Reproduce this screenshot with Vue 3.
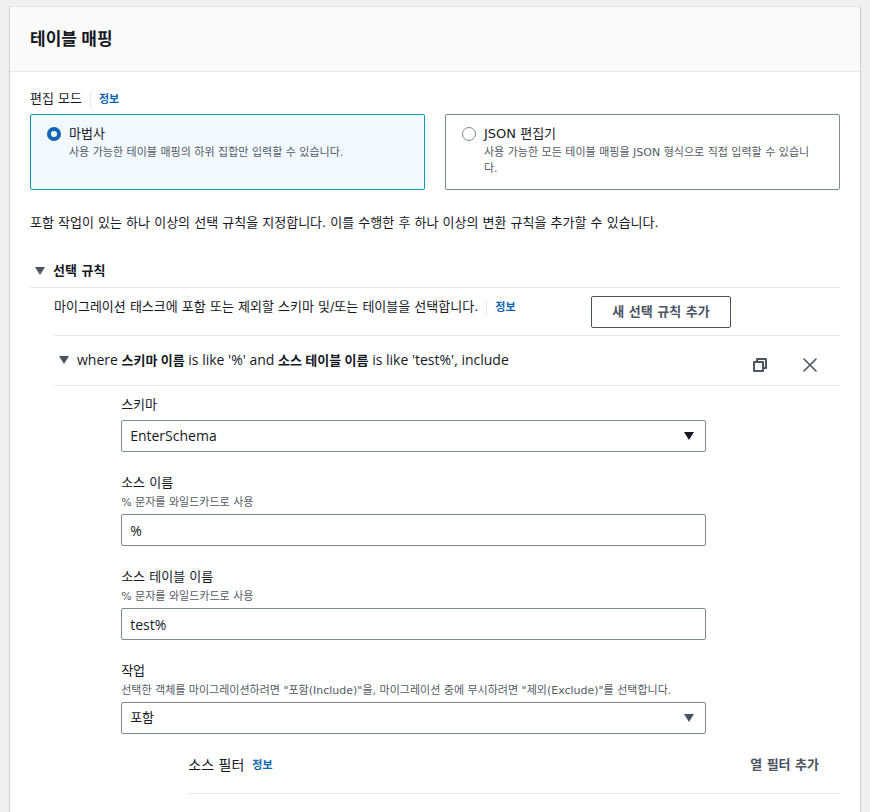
<script setup>
import { ref } from 'vue'

const mode = ref('wizard')
const modes = [
  { value: 'wizard', title: '마법사', text: '사용 가능한 테이블 매핑의 하위 집합만 입력할 수 있습니다.' },
  { value: 'json', title: 'JSON 편집기', text: '사용 가능한 모든 테이블 매핑을 JSON 형식으로 직접 입력할 수 있습니다.' },
]

const rulesOpen = ref(true)
const ruleOpen = ref(true)
const schema = ref('EnterSchema')
const sourceName = ref('%')
const tableName = ref('test%')
const action = ref('include')
</script>

<template>
  <main class="page">
    <section class="card">
      <header class="card-header">
        <h2>테이블 매핑</h2>
      </header>

      <div class="card-body">
        <div class="label-row">
          <span id="mode-label">편집 모드</span>
          <a class="info divided" href="#info-mode">정보</a>
        </div>

        <div class="tiles" role="radiogroup" aria-labelledby="mode-label">
          <label v-for="m in modes" :key="m.value" class="tile" :class="{ selected: mode === m.value }">
            <input v-model="mode" class="radio" type="radio" name="mode" :value="m.value" />
            <span class="tile-text">
              <span class="tile-title">{{ m.title }}</span>
              <span class="hint">{{ m.text }}</span>
            </span>
          </label>
        </div>

        <p class="intro">포함 작업이 있는 하나 이상의 선택 규칙을 지정합니다. 이를 수행한 후 하나 이상의 변환 규칙을 추가할 수 있습니다.</p>

        <h3 class="section-head">
          <button class="toggle strong" type="button" :aria-expanded="rulesOpen" @click="rulesOpen = !rulesOpen">
            <svg class="caret" viewBox="0 0 10 8" aria-hidden="true"><path d="M0 0h10L5 8z" /></svg>
            <span>선택 규칙</span>
          </button>
        </h3>

        <div v-show="rulesOpen" class="rules">
          <div class="grid add-row">
            <div class="label-row add-text">
              <span>마이그레이션 태스크에 포함 또는 제외할 스키마 및/또는 테이블을 선택합니다.</span>
              <a class="info divided" href="#info-rules">정보</a>
            </div>
            <button class="add-button" type="button">새 선택 규칙 추가</button>
          </div>

          <div class="rule-head">
            <button class="toggle" type="button" :aria-expanded="ruleOpen" @click="ruleOpen = !ruleOpen">
              <svg class="caret" viewBox="0 0 10 8" aria-hidden="true"><path d="M0 0h10L5 8z" /></svg>
              <span class="latin">where <b>스키마 이름</b> is like '%' and <b>소스 테이블 이름</b> is like 'test%', include</span>
            </button>
            <div class="rule-actions">
              <button class="icon-button" type="button" aria-label="복제">
                <svg viewBox="0 0 16 16" aria-hidden="true"><path d="M2 5h9v9H2zM5 5V2h9v9h-3" stroke-width="2" stroke-linejoin="round" /></svg>
              </button>
              <button class="icon-button" type="button" aria-label="제거">
                <svg viewBox="0 0 16 16" aria-hidden="true"><path d="M2 2l12 12M14 2L2 14" stroke-linecap="round" class="thin" /></svg>
              </button>
            </div>
          </div>

          <form v-show="ruleOpen" class="grid form" @submit.prevent>
            <div class="field">
              <label for="schema">스키마</label>
              <div class="select">
                <select id="schema" v-model="schema" class="control latin">
                  <option value="EnterSchema">EnterSchema</option>
                </select>
                <svg class="caret dark" viewBox="0 0 10 8" aria-hidden="true"><path d="M0 0h10L5 8z" /></svg>
              </div>
            </div>

            <div class="field">
              <label for="source">소스 이름</label>
              <span id="source-hint" class="hint">% 문자를 와일드카드로 사용</span>
              <input id="source" v-model="sourceName" class="control latin" type="text" aria-describedby="source-hint" />
            </div>

            <div class="field">
              <label for="table">소스 테이블 이름</label>
              <span id="table-hint" class="hint">% 문자를 와일드카드로 사용</span>
              <input id="table" v-model="tableName" class="control latin" type="text" aria-describedby="table-hint" />
            </div>

            <div class="field">
              <label for="action">작업</label>
              <span id="action-hint" class="hint">선택한 객체를 마이그레이션하려면 "포함(Include)"을, 마이그레이션 중에 무시하려면 "제외(Exclude)"를 선택합니다.</span>
              <div class="select">
                <select id="action" v-model="action" class="control" aria-describedby="action-hint">
                  <option value="include">포함</option>
                  <option value="exclude">제외</option>
                </select>
                <svg class="caret" viewBox="0 0 10 8" aria-hidden="true"><path d="M0 0h10L5 8z" /></svg>
              </div>
            </div>

            <div class="filters">
              <div class="label-row">
                <span class="filters-title">소스 필터</span>
                <a class="info" href="#info-filter">정보</a>
              </div>
              <button class="link-button" type="button">열 필터 추가</button>
            </div>
          </form>
        </div>
      </div>
    </section>
  </main>
</template>

<style>
body {
  margin: 0;
  background: #eff1f1;
}
</style>

<style scoped>
.page {
  display: flex;
  box-sizing: border-box;
  min-height: 100vh;
  padding: 6px 9px 0;
  color: #16191f;
  font: 13px/22px "DejaVu Sans", "Noto Sans CJK KR", sans-serif;
}

.page *,
.page *::before {
  box-sizing: border-box;
}

.card {
  flex: 1;
  min-width: 0;
  background: #fff;
  border: 1px solid #c9cfcf;
  border-top-color: #e3e7e7;
  border-bottom: 0;
}

.card-header {
  padding: 20px;
  background: #fafafa;
  border-bottom: 1px solid #e6eaea;
}

h2 {
  margin: 0;
  font-family: "Open Sans", "Noto Sans CJK KR", sans-serif;
  font-size: 17px;
  font-weight: 700;
  line-height: 24px;
}

h3,
p {
  margin: 0;
}

.card-body {
  padding: 16px 20px 18px;
}

button,
input,
select {
  margin: 0;
  color: inherit;
  font: inherit;
}

button {
  padding: 0;
  background: none;
  border: 0;
  cursor: pointer;
}

.latin {
  font-family: "Open Sans", "Noto Sans CJK KR", sans-serif;
  font-size: 14px;
}

.latin b {
  font-size: 13px;
}

.label-row {
  display: flex;
  gap: 8px;
}

.info {
  padding-top: 2px;
  color: #0f66b4;
  font-size: 11px;
  font-weight: 700;
  line-height: 20px;
  text-decoration: none;
}

.divided {
  display: flex;
  align-items: center;
  gap: 8px;
}

.divided::before {
  content: "";
  width: 1px;
  height: 16px;
  background: #e6eaea;
}

.tiles {
  display: grid;
  grid-template-columns: 1fr 1fr;
  gap: 20px;
  margin-top: 4px;
}

.tile {
  display: flex;
  gap: 8px;
  padding: 9px 20px 12px 16px;
  border: 1px solid #7c8b8b;
  border-radius: 2px;
  cursor: pointer;
}

.tile.selected {
  background: #f1f8ff;
  border-color: #0e9abc;
}

.radio {
  flex: none;
  width: 14px;
  height: 14px;
  margin-top: 3px;
  background: #fff;
  border: 1px solid #7c8b8b;
  border-radius: 50%;
  appearance: none;
}

.radio:checked {
  border: 4px solid #0f66b4;
}

.tile-title {
  display: block;
  line-height: 20px;
}

.hint {
  display: block;
  padding-top: 1px;
  color: #545b64;
  font-size: 11px;
  line-height: 16px;
}

.tile .hint {
  word-break: break-all;
}

.intro {
  margin-top: 22px;
}

.section-head {
  margin-top: 26px;
  padding: 0 5px 5px;
  border-bottom: 1px solid #e6eaea;
  font-size: 13px;
}

.toggle {
  display: flex;
  align-items: center;
  gap: 8px;
  text-align: left;
}

.strong {
  font-weight: 700;
}

.caret {
  flex: none;
  width: 10px;
  height: 8px;
  fill: #4c5462;
}

.caret.dark {
  fill: #16191f;
}

.rules {
  padding-left: 24px;
}

.grid {
  display: grid;
  grid-template-columns: repeat(12, minmax(0, 1fr));
  column-gap: 20px;
}

.add-row {
  align-items: start;
  padding: 8px 0 7px;
  border-bottom: 1px solid #e6eaea;
}

.add-text {
  grid-column: 1 / span 8;
}

.add-button {
  grid-column: 9 / -1;
  justify-self: start;
  height: 32px;
  padding: 0 20px;
  color: #4c5462;
  border: 1px solid #4c5462;
  border-radius: 2px;
  font-weight: 700;
}

.rule-head {
  display: flex;
  justify-content: space-between;
  align-items: start;
  padding: 13px 22px 12px 5px;
  border-bottom: 1px solid #e6eaea;
}

.rule-actions {
  display: flex;
  gap: 34px;
  padding-top: 8px;
}

.icon-button {
  width: 16px;
  height: 16px;
}

.icon-button svg {
  display: block;
  fill: none;
  stroke: #4c5462;
}

.icon-button .thin {
  stroke-width: 1.6;
}

.form {
  row-gap: 20px;
  padding-top: 8px;
}

.field {
  grid-column: 2 / span 9;
}

.field label {
  display: block;
}

.control {
  display: block;
  width: 100%;
  height: 32px;
  padding: 0 8px;
  background: #fff;
  border: 1px solid #7c8b8b;
  border-radius: 2px;
  appearance: none;
}

.select {
  position: relative;
}

label + .select {
  margin-top: 4px;
}

.hint + .control,
.hint + .select {
  margin-top: 3px;
}

.select .caret {
  position: absolute;
  top: 12px;
  right: 12px;
  pointer-events: none;
}

.filters {
  display: flex;
  grid-column: 3 / -1;
  justify-content: space-between;
  padding: 0 21px 17px 0;
  border-bottom: 1px solid #e6eaea;
}

.filters-title {
  font-size: 14px;
}

.link-button {
  color: #4c5462;
  font-weight: 700;
}
</style>
